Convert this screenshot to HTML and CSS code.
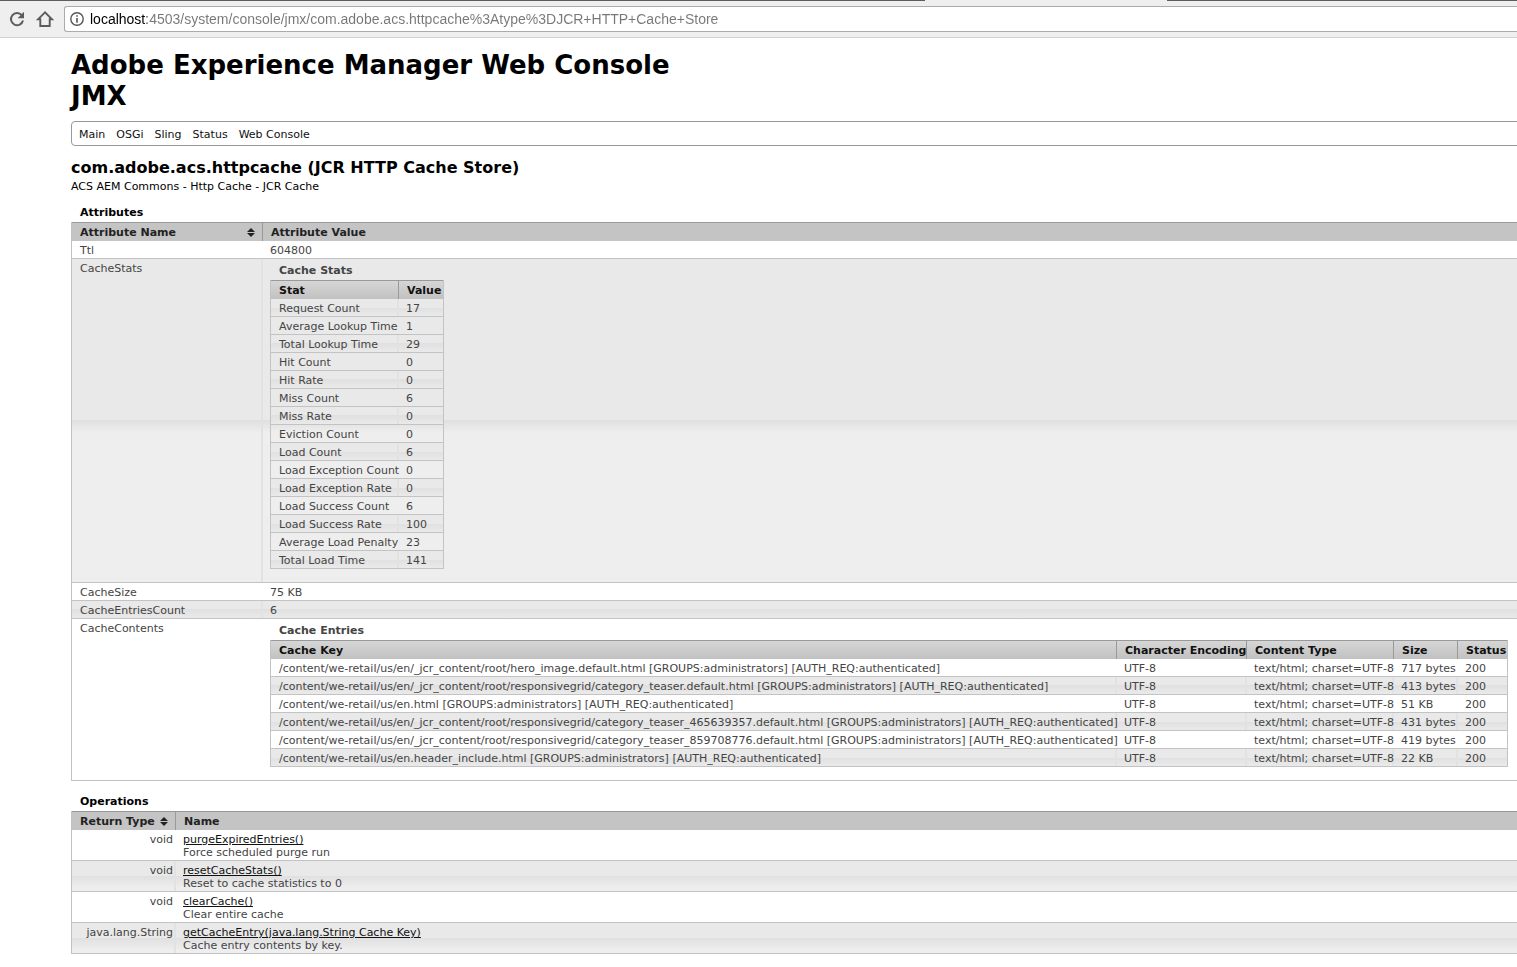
FILE: index.html
```html
<!DOCTYPE html>
<html lang="en">
<head>
<meta charset="utf-8">
<title>Adobe Experience Manager Web Console - JMX</title>
<link rel="stylesheet" href="styles.css">
</head>
<body>
<header class="browser">
  <div class="tabs"><span class="tab-strip"></span><span></span><span class="tab-strip"></span></div>
  <div class="toolbar">
    <button class="tool" type="button" aria-label="Reload"><svg width="16" height="16" viewBox="0 0 16 16"><path d="M12.8 4.2A6.1 6.1 0 1 0 14 9.5" fill="none" stroke="#5c5c5c" stroke-width="2"/><path d="M15 .8v6.4H8.6z" fill="#5c5c5c"/></svg></button>
    <button class="tool" type="button" aria-label="Home"><svg width="18" height="16" viewBox="0 0 18 16"><path d="M9 1.3 2 8.3h2.3V15h9.4V8.3H16z" fill="none" stroke="#5c5c5c" stroke-width="1.9"/></svg></button>
    <div class="address">
      <svg width="14" height="14" viewBox="0 0 14 14"><circle cx="7" cy="7" r="6.2" fill="none" stroke="#555" stroke-width="1.4"/><path d="M6.2 3.2h1.6v1.6H6.2zM6.2 6h1.6v4.8H6.2z" fill="#555"/></svg>
      <input class="url" type="text" aria-label="Address" value="localhost:4503/system/console/jmx/com.adobe.acs.httpcache%3Atype%3DJCR+HTTP+Cache+Store">
    </div>
  </div>
</header>
<main class="page">
  <h1>Adobe Experience Manager Web Console<br>JMX</h1>
  <nav class="menu">
    <a href="#main">Main</a><a href="#osgi">OSGi</a><a href="#sling">Sling</a><a href="#status">Status</a><a href="#console">Web Console</a>
  </nav>
  <h2>com.adobe.acs.httpcache (JCR HTTP Cache Store)</h2>
  <p class="description">ACS AEM Commons - Http Cache - JCR Cache</p>

  <table class="grid attributes">
    <caption>Attributes</caption>
    <colgroup><col class="col-name"><col></colgroup>
    <thead><tr>
      <th><button class="sort" type="button">Attribute Name <svg width="8" height="9" viewBox="0 0 8 9"><path d="M4 0 8 4H0zM0 5h8L4 9z"/></svg></button></th>
      <th>Attribute Value</th>
    </tr></thead>
    <tbody>
      <tr><td>Ttl</td><td>604800</td></tr>
      <tr><td>CacheStats</td><td>
        <table class="grid nested stats">
          <caption>Cache Stats</caption>
          <colgroup><col class="col-stat"><col class="col-value"></colgroup>
          <thead><tr><th>Stat</th><th>Value</th></tr></thead>
          <tbody>
            <tr><td>Request Count</td><td>17</td></tr>
            <tr><td>Average Lookup Time</td><td>1</td></tr>
            <tr><td>Total Lookup Time</td><td>29</td></tr>
            <tr><td>Hit Count</td><td>0</td></tr>
            <tr><td>Hit Rate</td><td>0</td></tr>
            <tr><td>Miss Count</td><td>6</td></tr>
            <tr><td>Miss Rate</td><td>0</td></tr>
            <tr><td>Eviction Count</td><td>0</td></tr>
            <tr><td>Load Count</td><td>6</td></tr>
            <tr><td>Load Exception Count</td><td>0</td></tr>
            <tr><td>Load Exception Rate</td><td>0</td></tr>
            <tr><td>Load Success Count</td><td>6</td></tr>
            <tr><td>Load Success Rate</td><td>100</td></tr>
            <tr><td>Average Load Penalty</td><td>23</td></tr>
            <tr><td>Total Load Time</td><td>141</td></tr>
          </tbody>
        </table>
      </td></tr>
      <tr><td>CacheSize</td><td>75 KB</td></tr>
      <tr><td>CacheEntriesCount</td><td>6</td></tr>
      <tr><td>CacheContents</td><td>
        <table class="grid nested entries">
          <caption>Cache Entries</caption>
          <colgroup><col class="col-key"><col class="col-encoding"><col class="col-type"><col class="col-size"><col class="col-status"></colgroup>
          <thead><tr><th>Cache Key</th><th>Character Encoding</th><th>Content Type</th><th>Size</th><th>Status</th></tr></thead>
          <tbody>
            <tr><td>/content/we-retail/us/en/_jcr_content/root/hero_image.default.html [GROUPS:administrators] [AUTH_REQ:authenticated]</td><td>UTF-8</td><td>text/html; charset=UTF-8</td><td>717 bytes</td><td>200</td></tr>
            <tr><td>/content/we-retail/us/en/_jcr_content/root/responsivegrid/category_teaser.default.html [GROUPS:administrators] [AUTH_REQ:authenticated]</td><td>UTF-8</td><td>text/html; charset=UTF-8</td><td>413 bytes</td><td>200</td></tr>
            <tr><td>/content/we-retail/us/en.html [GROUPS:administrators] [AUTH_REQ:authenticated]</td><td>UTF-8</td><td>text/html; charset=UTF-8</td><td>51 KB</td><td>200</td></tr>
            <tr><td>/content/we-retail/us/en/_jcr_content/root/responsivegrid/category_teaser_465639357.default.html [GROUPS:administrators] [AUTH_REQ:authenticated]</td><td>UTF-8</td><td>text/html; charset=UTF-8</td><td>431 bytes</td><td>200</td></tr>
            <tr><td>/content/we-retail/us/en/_jcr_content/root/responsivegrid/category_teaser_859708776.default.html [GROUPS:administrators] [AUTH_REQ:authenticated]</td><td>UTF-8</td><td>text/html; charset=UTF-8</td><td>419 bytes</td><td>200</td></tr>
            <tr><td>/content/we-retail/us/en.header_include.html [GROUPS:administrators] [AUTH_REQ:authenticated]</td><td>UTF-8</td><td>text/html; charset=UTF-8</td><td>22 KB</td><td>200</td></tr>
          </tbody>
        </table>
      </td></tr>
    </tbody>
  </table>

  <table class="grid operations">
    <caption>Operations</caption>
    <colgroup><col class="col-return"><col></colgroup>
    <thead><tr>
      <th><button class="sort" type="button">Return Type <svg width="8" height="9" viewBox="0 0 8 9"><path d="M4 0 8 4H0zM0 5h8L4 9z"/></svg></button></th>
      <th>Name</th>
    </tr></thead>
    <tbody>
      <tr><td>void</td><td><a href="#purge">purgeExpiredEntries()</a><br>Force scheduled purge run</td></tr>
      <tr><td>void</td><td><a href="#reset">resetCacheStats()</a><br>Reset to cache statistics to 0</td></tr>
      <tr><td>void</td><td><a href="#clear">clearCache()</a><br>Clear entire cache</td></tr>
      <tr><td>java.lang.String</td><td><a href="#entry">getCacheEntry(java.lang.String Cache Key)</a><br>Cache entry contents by key.</td></tr>
    </tbody>
  </table>
</main>
</body>
</html>
```
FILE: styles.css
```css
* { box-sizing: border-box; }
html { background: #fff; }
body {
  margin: 0;
  overflow-x: hidden;
  color: #000;
  font: 11px/13px Verdana, "DejaVu Sans", sans-serif;
}
button { padding: 0; border: 0; background: none; color: inherit; font: inherit; }

/* browser chrome */
.browser { background: #efefef; border-bottom: 1px solid #d0d0d0; }
.tabs { display: grid; grid-template-columns: 61% 242px 1fr; height: 1px; }
.tab-strip { background: #605d60; }
.toolbar { display: flex; align-items: center; padding: 5px 0 5px 9px; }
.tool { display: flex; width: 18px; margin-right: 9px; }
.tool + .tool { margin-right: 10px; }
.address {
  display: flex;
  flex: 1;
  align-items: center;
  gap: 6px;
  height: 26px;
  padding-left: 5px;
  border: 1px solid #ababab;
  border-right: 0;
  border-radius: 3px 0 0 3px;
  background: #fff;
}
.url {
  flex: 1;
  height: 24px;
  padding: 0;
  border: 0;
  outline: 0;
  background: linear-gradient(to right, #000 57px, #777 57px);
  -webkit-background-clip: text;
  background-clip: text;
  color: transparent;
  font: 14px/24px "Liberation Sans", Arial, sans-serif;
}

/* console page */
.page { margin: 12px -8px 13px 71px; }
h1 { margin: 0 0 9px; font-size: 26px; line-height: 31px; }
h2 { margin: 12px 0 2px; font-size: 16px; line-height: 20px; }
.description { margin: 0 0 10px; }
.menu {
  display: flex;
  gap: 11px;
  padding: 6px 7px 4px;
  border: 1px solid #999;
  border-radius: 4px;
}
.menu a { color: #111; text-decoration: none; }

/* data tables */
.grid {
  width: 100%;
  border-spacing: 0;
  border: 1px solid #c3c3c3;
  border-width: 0 1px 0 1px;
  table-layout: fixed;
  color: #444;
  white-space: nowrap;
}
caption { padding: 3px 9px; color: #000; font-weight: bold; text-align: left; }
th {
  height: 19px;
  padding: 3px 2px 2px 8px;
  border-top: 1px solid #999;
  border-right: 1px solid #999;
  background: #c4c4c4;
  color: #222;
  text-align: left;
}
th:last-child { border-right: 0; }
td {
  padding: 3px 3px 1px 7px;
  border-bottom: 1px solid #c3c3c3;
  vertical-align: top;
}
td:first-child { padding-left: 8px; }

/* glossy stripes */
.attributes > tbody > tr:nth-child(even) > td,
.operations > tbody > tr:nth-child(even) > td,
.entries > tbody > tr:nth-child(even) > td,
.stats > tbody > tr:nth-child(odd) > td {
  background: linear-gradient(#e9e9e9 50%, #e0e0e0 50%, #eee calc(50% + 12px));
}
.attributes > tbody > tr:nth-child(even) > td:first-child,
.operations > tbody > tr:nth-child(even) > td:first-child,
.entries > tbody > tr:nth-child(even) > td:not(:last-child),
.stats > tbody > tr:nth-child(odd) > td:first-child {
  box-shadow: inset -2px 0 #e2e2e2;
}

.col-name { width: 191px; }
.col-return { width: 104px; }
.attributes { margin-bottom: 11px; }
.operations td:first-child { text-align: right; }

.nested { margin-bottom: 12px; }
.nested caption { padding-top: 2px; color: #444; }
.nested th { background: linear-gradient(#d6d6d6, #c1c1c1); color: #111; }
.stats { width: 174px; }
.entries { width: 1238px; }
.col-stat { width: 128px; }
.col-value { width: 44px; }
.col-key { width: 846px; }
.col-encoding { width: 130px; }
.col-type { width: 147px; }
.col-size { width: 64px; }
.col-status { width: 49px; }

.sort {
  display: flex;
  align-items: center;
  justify-content: space-between;
  width: 100%;
  padding-right: 5px;
  font-weight: bold;
}
.sort svg { fill: #222; }
.operations a { color: #111; }
```
